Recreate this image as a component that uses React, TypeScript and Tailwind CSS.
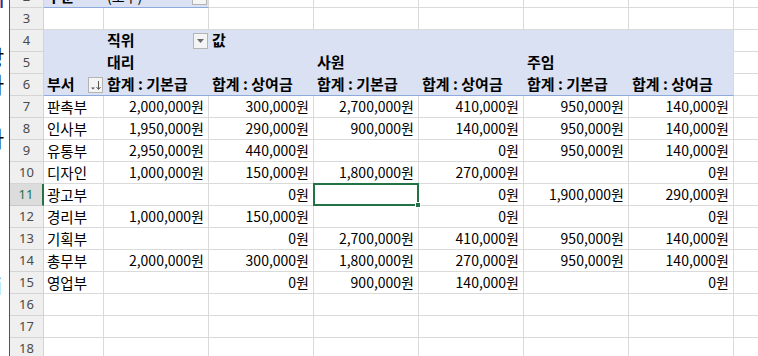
import React from "react";

const FONT = { fontFamily: '"Noto Sans CJK KR", "Noto Sans", sans-serif' };

const dataRows: string[][] = [
  ["판촉부", "2,000,000원", "300,000원", "2,700,000원", "410,000원", "950,000원", "140,000원"],
  ["인사부", "1,950,000원", "290,000원", "900,000원", "140,000원", "950,000원", "140,000원"],
  ["유통부", "2,950,000원", "440,000원", "", "0원", "950,000원", "140,000원"],
  ["디자인", "1,000,000원", "150,000원", "1,800,000원", "270,000원", "", "0원"],
  ["광고부", "", "0원", "", "0원", "1,900,000원", "290,000원"],
  ["경리부", "1,000,000원", "150,000원", "", "0원", "", "0원"],
  ["기획부", "", "0원", "2,700,000원", "410,000원", "950,000원", "140,000원"],
  ["총무부", "2,000,000원", "300,000원", "1,800,000원", "270,000원", "950,000원", "140,000원"],
  ["영업부", "", "0원", "900,000원", "140,000원", "", "0원"],
];

const colW = ["w-[60px]", "w-[105px]", "w-[105px]", "w-[105px]", "w-[105px]", "w-[105px]", "w-[105px]"];

function RowHead({ n, active }: { n: number; active?: boolean }) {
  return (
    <div
      className={`w-[34px] shrink-0 h-full flex items-center justify-center border-b text-[13px] ${
        active
          ? "bg-[#dcdcdc] text-[#217346] border-r-2 border-r-[#217346] border-b-[#c8c8c8]"
          : "bg-[#efefef] text-[#4a4a4a] border-r border-[#d4d4d4]"
      }`}
      style={{ fontFamily: '"Noto Sans", "Open Sans", sans-serif' }}
    >
      {n}
    </div>
  );
}

function DropBox() {
  return (
    <span className="w-[15px] h-[16px] border border-[#b4b4b4] bg-[#f4f4f4] flex items-center justify-center shrink-0">
      <svg width="7" height="4" viewBox="0 0 7 4">
        <path d="M0 0H7L3.5 4Z" fill="#6a6a6a" />
      </svg>
    </span>
  );
}

function SortBox() {
  return (
    <span className="w-[15px] h-[16px] border border-[#b4b4b4] bg-[#f4f4f4] flex items-center justify-center shrink-0">
      <svg width="13" height="14" viewBox="0 0 13 14">
        <path d="M2 9.5H6L4 11.5Z" fill="#555" />
        <path d="M9.5 3V11" stroke="#555" strokeWidth="1" />
        <path d="M7.5 9L9.5 11.5L11.5 9" stroke="#555" strokeWidth="1" fill="none" />
      </svg>
    </span>
  );
}

function PivotRow({ n, cells }: { n: number; cells: React.ReactNode[] }) {
  const last = n === 6;
  return (
    <div className="flex h-[22px] shrink-0">
      <RowHead n={n} />
      {cells.map((c, i) => (
        <div
          key={i}
          className={`${colW[i]} shrink-0 h-full bg-[#d9e1f2] border-b pl-[3px] pr-[1px] flex items-center font-bold text-[15px] text-black whitespace-nowrap overflow-hidden ${
            last ? "border-[#8ea9db]" : "border-[#d9e1f2]"
          } ${i === 6 ? "border-r border-r-[#d9d9d9]" : ""}`}
        >
          {c}
        </div>
      ))}
      <div className="flex-1 h-full border-b border-[#dadada]" />
    </div>
  );
}

export default function App() {
  return (
    <div className="w-[758px] h-[356px] overflow-hidden bg-white flex" style={FONT}>
      {/* edge of the window behind */}
      <div className="w-[9px] shrink-0 h-full overflow-hidden bg-white flex flex-col text-[22px] leading-none">
        <span className="-ml-[9px] -mt-[13px] h-[58px] text-[#3a2a8a]">n</span>
        <span className="-ml-[16px] h-[27px] text-black">상</span>
        <span className="-ml-[16px] h-[54px] text-black">나</span>
        <span className="-ml-[16px] h-[148px] text-black">나</span>
        <span className="-ml-[5px] font-bold text-[#3a2a8a]">i</span>
      </div>
      <div className="w-px shrink-0 bg-[#217346]" />

      <div className="flex-1 flex flex-col -mt-[14px] text-[14px] text-black">
        {/* row 2: report filter */}
        <div className="flex h-[22px] shrink-0">
          <RowHead n={2} />
          <div className="w-[60px] shrink-0 h-full bg-[#d9e1f2] border-b border-[#8ea9db] pl-[3px] flex items-center font-bold text-[15px]">
            구분
          </div>
          <div className="w-[105px] shrink-0 h-full bg-[#d9e1f2] border-b border-r border-b-[#8ea9db] border-r-[#d9d9d9] pl-[3px] pr-[1px] flex items-center justify-between">
            <span>(모두)</span>
            <DropBox />
          </div>
          {[0, 1, 2, 3, 4].map((i) => (
            <div key={i} className="w-[105px] shrink-0 h-full border-r border-b border-[#dadada]" />
          ))}
          <div className="flex-1 h-full border-b border-[#dadada]" />
        </div>

        {/* row 3 */}
        <div className="flex h-[22px] shrink-0">
          <RowHead n={3} />
          {colW.map((w, i) => (
            <div key={i} className={`${w} shrink-0 h-full border-r border-b border-[#dadada]`} />
          ))}
          <div className="flex-1 h-full border-b border-[#dadada]" />
        </div>

        <PivotRow
          n={4}
          cells={[
            "",
            <div className="flex-1 flex items-center justify-between">
              <span>직위</span>
              <DropBox />
            </div>,
            "값",
            "",
            "",
            "",
            "",
          ]}
        />
        <PivotRow n={5} cells={["", "대리", "", "사원", "", "주임", ""]} />
        <PivotRow
          n={6}
          cells={[
            <div className="flex-1 flex items-center justify-between">
              <span>부서</span>
              <SortBox />
            </div>,
            "합계 : 기본급",
            "합계 : 상여금",
            "합계 : 기본급",
            "합계 : 상여금",
            "합계 : 기본급",
            "합계 : 상여금",
          ]}
        />

        {dataRows.map((r, ri) => {
          const n = ri + 7;
          return (
            <div key={n} className="flex h-[22px] shrink-0">
              <RowHead n={n} active={n === 11} />
              {r.map((v, i) => (
                <div
                  key={i}
                  className={`${colW[i]} shrink-0 h-full border-r border-b border-[#dadada] flex items-center whitespace-nowrap ${
                    i === 0 ? "pl-[3px] text-[14.5px]" : "justify-end pr-[4px]"
                  } ${n === 11 && i === 3 ? "relative" : ""}`}
                >
                  {v}
                  {n === 11 && i === 3 && (
                    <>
                      <span className="absolute -left-px -top-px -right-px -bottom-px border-2 border-[#217346]" />
                      <span className="absolute -right-[3px] -bottom-[3px] w-[6px] h-[6px] bg-[#217346] border border-white" />
                    </>
                  )}
                </div>
              ))}
              <div className="flex-1 h-full border-b border-[#dadada]" />
            </div>
          );
        })}

        {[16, 17, 18].map((n) => (
          <div key={n} className="flex h-[22px] shrink-0">
            <RowHead n={n} />
            {colW.map((w, i) => (
              <div key={i} className={`${w} shrink-0 h-full border-r border-b border-[#dadada]`} />
            ))}
            <div className="flex-1 h-full border-b border-[#dadada]" />
          </div>
        ))}
      </div>
    </div>
  );
}
